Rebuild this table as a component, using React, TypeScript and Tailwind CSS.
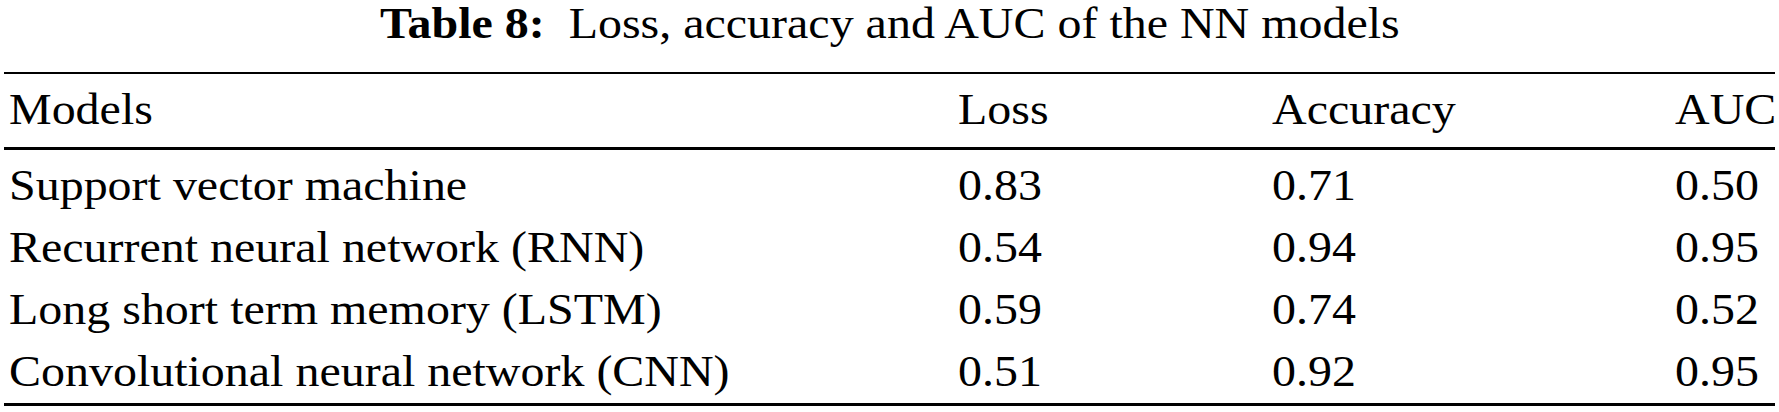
import React from "react";

const rows: string[][] = [
  ["Support vector machine", "0.83", "0.71", "0.50"],
  ["Recurrent neural network (RNN)", "0.54", "0.94", "0.95"],
  ["Long short term memory (LSTM)", "0.59", "0.74", "0.52"],
  ["Convolutional neural network (CNN)", "0.51", "0.92", "0.95"],
];

function Cell({ children }: { children: React.ReactNode }) {
  return (
    <div className="whitespace-nowrap">
      <span className="inline-block origin-left scale-x-[1.09] whitespace-nowrap">{children}</span>
    </div>
  );
}

function Row({ cells }: { cells: string[] }) {
  return (
    <div className="grid grid-cols-[949px_314px_403px_1fr] pl-[5px] leading-[62px] h-[62px]">
      {cells.map((c, i) => (
        <Cell key={i}>{c}</Cell>
      ))}
    </div>
  );
}

export default function App() {
  return (
    <div className="w-[1779px] h-[412px] bg-white text-black font-['Liberation_Serif','Times_New_Roman',serif] text-[44px]">
      <div className="leading-[48px] pt-[0px] text-center whitespace-nowrap">
        <span className="inline-block origin-center scale-x-[1.09]">
          <b className="font-bold mr-[22px]">Table 8:</b>Loss, accuracy and AUC of the NN models
        </span>
      </div>
      <div className="mx-[4px] mt-[24px]">
        <div className="h-[2px] bg-black" />
        <div className="pt-[5px]">
          <Row cells={["Models", "Loss", "Accuracy", "AUC"]} />
        </div>
        <div className="mt-[6px] h-[3px] bg-black" />
        <div className="pt-[5px]">
          {rows.map((r, i) => (
            <Row key={i} cells={r} />
          ))}
        </div>
        <div className="h-[3px] bg-black" />
      </div>
    </div>
  );
}
